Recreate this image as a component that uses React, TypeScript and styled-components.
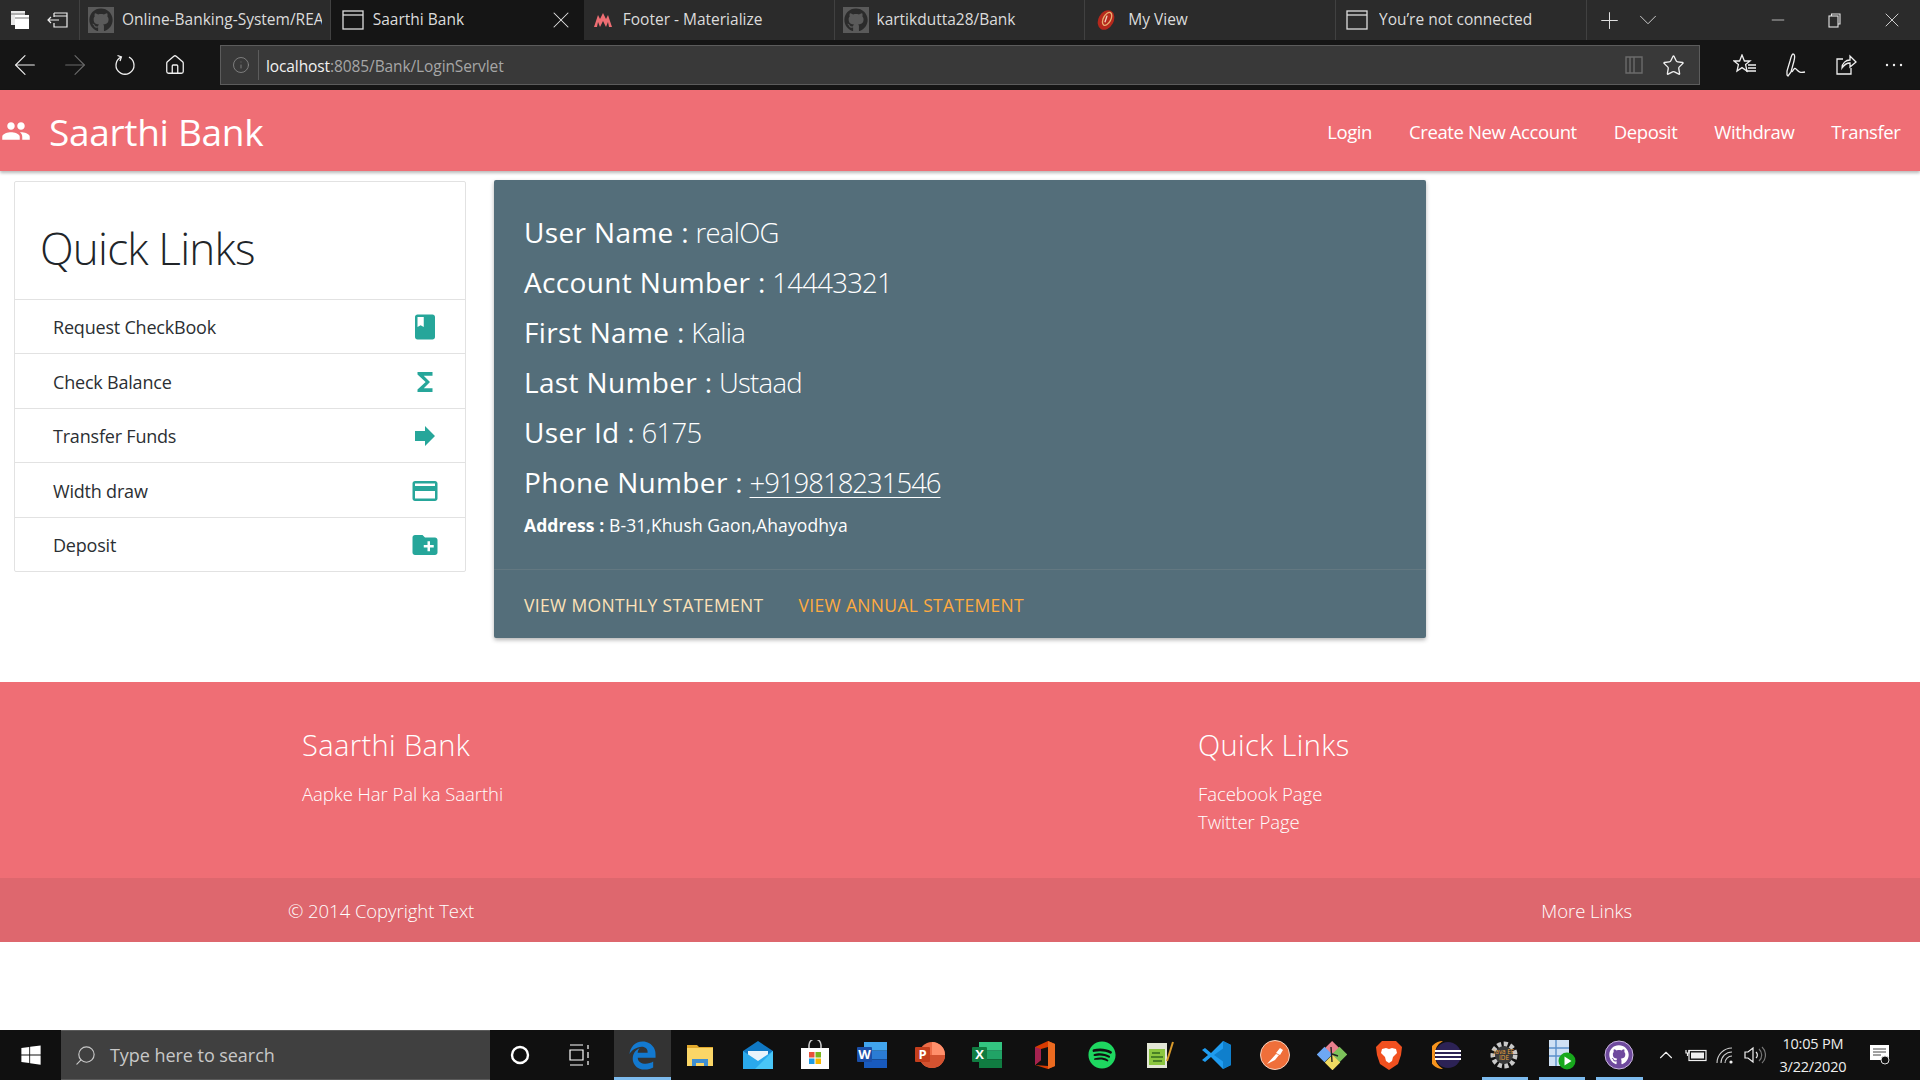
import React from "react";
import styled, { createGlobalStyle } from "styled-components";
import { MdPeople, MdClass, MdFunctions, MdForward, MdCreditCard, MdCreateNewFolder } from "react-icons/md";
import { FaGithub, FaSpotify, FaEdgeLegacy, FaWindows } from "react-icons/fa";
import { ArrowLeft, ArrowRight, Home, Info, Star, Search, ChevronUp, ChevronDown, Plus, Minus, X } from "lucide-react";

const fontStack = `"Open Sans", "Noto Sans", "Liberation Sans", sans-serif`;

const GlobalStyle = createGlobalStyle`
  html, body {
    margin: 0;
    padding: 0;
    background: #fff;
    overflow: hidden;
  }
  * {
    box-sizing: border-box;
  }
`;

const Screen = styled.div`
  width: 1920px;
  height: 1080px;
  display: flex;
  flex-direction: column;
  overflow: hidden;
  font-family: ${fontStack};
`;

/* ---------- browser chrome ---------- */

const TabBar = styled.div`
  height: 40px;
  display: flex;
  background: #2b2b2b;
  color: #e4e4e4;
  flex-shrink: 0;
`;

const TabTools = styled.div`
  width: 80px;
  display: flex;
  align-items: center;
  justify-content: space-around;
  padding: 0 2px;
  border-right: 1px solid #414141;
`;

const Tab = styled.div<{ $active?: boolean }>`
  width: ${(p) => (p.$active ? 253 : 250.75)}px;
  display: flex;
  align-items: center;
  gap: ${(p) => (p.$active ? 9 : 11)}px;
  padding: 0 8px 0 ${(p) => (p.$active ? 11 : 10)}px;
  background: ${(p) => (p.$active ? "#151515" : "transparent")};
  border-right: 1px solid ${(p) => (p.$active ? "transparent" : "#414141")};
  overflow: hidden;
`;

const TabTitle = styled.span`
  flex: 1;
  font-size: 15.5px;
  line-height: 38px;
  padding-bottom: 2px;
  white-space: nowrap;
  overflow: hidden;
  color: #dcdcdc;
`;

const Favicon = styled.span`
  width: 26px;
  height: 26px;
  margin: 0 -3px 0 -2px;
  flex-shrink: 0;
  display: flex;
  align-items: center;
  justify-content: center;
  background: #5a5a5a;
  color: #2b2b2b;
`;

const TabEnd = styled.div`
  flex: 1;
  display: flex;
  align-items: center;
  padding-left: 4px;
  color: #e0e0e0;
`;

const TabButton = styled.span`
  width: 38px;
  display: flex;
  justify-content: center;
`;

const WindowButtons = styled.div`
  margin-left: auto;
  display: flex;
  align-items: center;
`;

const WindowButton = styled.span`
  width: 57px;
  display: flex;
  justify-content: center;
`;

const Toolbar = styled.div`
  height: 50px;
  display: flex;
  align-items: center;
  background: #151515;
  color: #f0f0f0;
  flex-shrink: 0;
`;

const NavButtons = styled.div`
  width: 220px;
  display: flex;
  align-items: center;
`;

const NavButton = styled.span<{ $dim?: boolean }>`
  width: 50px;
  display: flex;
  justify-content: center;
  color: ${(p) => (p.$dim ? "#6a6a6a" : "#f0f0f0")};
`;

const AddressBar = styled.div`
  width: 1480px;
  height: 40px;
  display: flex;
  align-items: center;
  background: #393939;
  border: 1px solid #5c5c5c;
  padding: 0 14px 0 11px;
  gap: 7px;
  color: #8a8a8a;
`;

const AddressDivider = styled.span`
  width: 1px;
  height: 30px;
  margin-left: 1px;
  background: #5c5c5c;
`;

const Url = styled.span`
  flex: 1;
  padding-top: 2px;
  font-size: 15.5px;
  letter-spacing: -0.1px;
  color: #a6a6a6;
`;

const UrlHost = styled.span`
  color: #f2f2f2;
`;

const AddressIcons = styled.div`
  display: flex;
  align-items: center;
  gap: 18px;
  color: #f0f0f0;
`;

const ToolIcons = styled.div`
  flex: 1;
  display: flex;
  align-items: center;
  justify-content: space-around;
  padding: 0 3px 0 20px;
  color: #f0f0f0;
`;

/* ---------- site navbar ---------- */

const Navbar = styled.nav`
  height: 81px;
  display: flex;
  align-items: center;
  padding-top: 2px;
  background: #ef6e75;
  color: #fff;
  box-shadow: 0 2px 3px rgba(0, 0, 0, 0.28);
  position: relative;
  flex-shrink: 0;
`;

const Brand = styled.div`
  display: flex;
  align-items: center;
  gap: 18px;
  font-size: 37px;
  font-weight: 400;
  letter-spacing: -0.3px;
  padding-left: 1px;
`;

const BrandIcon = styled.span`
  display: flex;
  margin-top: -2px;
`;

const NavLinks = styled.div`
  margin-left: auto;
  display: flex;
  padding-right: 1px;
`;

const NavLink = styled.a`
  padding: 0 18.5px;
  font-size: 18.5px;
  letter-spacing: -0.4px;
  font-weight: 400;
`;

/* ---------- page content ---------- */

const Content = styled.main`
  height: 511px;
  display: flex;
  align-items: flex-start;
  gap: 28px;
  padding: 9px 0 0 14px;
  flex-shrink: 0;
`;

const LinksCard = styled.section`
  width: 452px;
  margin-top: 1px;
  background: #fff;
  border: 1px solid #e2e2e2;
  border-radius: 2px;
  color: #212529;
`;

const LinksTitle = styled.h2`
  height: 117px;
  margin: 0;
  padding: 14px 0 0 25px;
  display: flex;
  align-items: center;
  font-size: 44px;
  font-weight: 300;
  letter-spacing: -0.8px;
`;

const LinkRow = styled.div`
  height: 54.45px;
  display: flex;
  align-items: center;
  justify-content: space-between;
  padding: 1px 25px 0 38px;
  border-top: 1px solid #e2e2e2;
  font-size: 18px;
  letter-spacing: -0.2px;
  color: #2b2f33;
  svg {
    color: #26a69a;
  }
`;

const AccountCard = styled.section`
  width: 932px;
  background: #546e7a;
  color: #fff;
  border-radius: 2px;
  box-shadow: 0 2px 4px rgba(0, 0, 0, 0.3);
  overflow: hidden;
`;

const AccountBody = styled.div`
  height: 389px;
  padding: 27px 30px 0;
`;

const Field = styled.div`
  height: 50px;
  line-height: 50px;
  font-size: 27.5px;
  letter-spacing: -0.7px;
  font-weight: 300;
`;

const FieldLabel = styled.span`
  font-size: 28px;
  font-weight: 400;
  letter-spacing: 0.35px;
`;

const Phone = styled.a`
  letter-spacing: -1px;
  text-decoration: underline;
  text-underline-offset: 4px;
  text-decoration-thickness: 1px;
`;

const Address = styled.div`
  margin-top: 6px;
  height: 24px;
  line-height: 24px;
  font-size: 17.5px;
  letter-spacing: 0.1px;
  font-weight: 400;
`;

const AddressLabel = styled.strong`
  font-weight: 700;
`;

const AccountActions = styled.div`
  height: 69px;
  display: flex;
  align-items: center;
  gap: 35px;
  padding: 2px 30px 0;
  border-top: 1px solid rgba(160, 160, 160, 0.2);
`;

const ActionLink = styled.a<{ $pale?: boolean }>`
  font-size: 17.5px;
  letter-spacing: 0.33px;
  font-weight: 400;
  color: ${(p) => (p.$pale ? "#fde2b8" : "#ffab40")};
`;

/* ---------- page footer ---------- */

const PageFooter = styled.footer`
  background: #ef6e75;
  color: #fff;
  flex-shrink: 0;
`;

const FooterMain = styled.div`
  height: 196px;
  width: 1344px;
  margin: 0 auto;
  padding-top: 42px;
  display: grid;
  grid-template-columns: 2fr 1fr;
`;

const FooterColumn = styled.div`
  padding-left: 14px;
`;

const FooterTitle = styled.h5`
  margin: 0 0 14px;
  font-size: 29px;
  line-height: 42px;
  font-weight: 300;
  letter-spacing: 0.4px;
`;

const FooterText = styled.div`
  font-size: 18.5px;
  line-height: 28px;
  letter-spacing: -0.05px;
  font-weight: 300;
  color: #fff;
`;

const CopyrightBar = styled.div`
  height: 64px;
  background: #de676e;
`;

const CopyrightInner = styled.div`
  width: 1344px;
  height: 100%;
  margin: 0 auto;
  display: flex;
  align-items: center;
  justify-content: space-between;
  font-size: 18.5px;
  letter-spacing: -0.05px;
  font-weight: 300;
`;

const Spacer = styled.div`
  flex: 1;
`;

/* ---------- windows taskbar ---------- */

const Taskbar = styled.div`
  height: 50px;
  display: flex;
  align-items: center;
  background: #101010;
  color: #fff;
  flex-shrink: 0;
`;

const StartButton = styled.div`
  width: 61px;
  display: flex;
  justify-content: center;
`;

const SearchBox = styled.div`
  width: 429px;
  height: 50px;
  display: flex;
  align-items: center;
  gap: 13px;
  padding-left: 13px;
  background: #404040;
  border-top: 1px solid #5a5a5a;
  border-bottom: 1px solid #5a5a5a;
  font-size: 18px;
  letter-spacing: -0.05px;
  color: #c8c8c8;
`;

const MirroredSearch = styled(Search)`
  transform: scaleX(-1);
`;

const TaskTool = styled.div`
  width: 60px;
  display: flex;
  justify-content: center;
`;

const AppList = styled.div`
  display: flex;
  margin-left: 4px;
`;

const AppSlot = styled.div<{ $active?: boolean; $running?: boolean }>`
  width: 57.45px;
  height: 50px;
  display: flex;
  align-items: center;
  justify-content: center;
  position: relative;
  background: ${(p) => (p.$active ? "#333" : "transparent")};
  &::after {
    content: "";
    display: ${(p) => (p.$active || p.$running ? "block" : "none")};
    position: absolute;
    bottom: 0;
    left: ${(p) => (p.$active ? 0 : 6)}px;
    right: ${(p) => (p.$active ? 0 : 5)}px;
    height: 3px;
    background: #7dbbee;
  }
`;

const Tray = styled.div`
  flex: 1;
  display: flex;
  align-items: center;
  padding-left: 3px;
  color: #f0f0f0;
`;

const TrayIcon = styled.span<{ $w: number }>`
  width: ${(p) => p.$w}px;
  display: flex;
  justify-content: center;
`;

const Clock = styled.div`
  width: 88px;
  text-align: center;
  font-size: 14.5px;
  line-height: 23px;
  letter-spacing: -0.2px;
  color: #eee;
`;

const Notify = styled.span`
  margin-left: 12px;
  display: flex;
`;

/* ---------- small drawings ---------- */

const TabsAsideIcon = () => (
  <svg width="20" height="20" viewBox="0 0 20 20">
    <rect x="1" y="1" width="14" height="14" fill="#e8e8e8" />
    <rect x="5" y="5" width="14" height="14" fill="#fff" />
    <rect x="1" y="3.5" width="14" height="1" fill="#777" />
    <rect x="5" y="7.5" width="14" height="1" fill="#777" />
  </svg>
);

const SetAsideIcon = () => (
  <svg width="22" height="18" viewBox="0 0 22 18" fill="none" stroke="#eee" strokeWidth="1.2">
    <path d="M7 2h13v14H7v-4M7 6V2M7 5h13M1 9h11M4 6L1 9l3 3" />
  </svg>
);

const PageIcon = () => (
  <svg width="22" height="20" viewBox="0 0 22 20" fill="none" stroke="#ddd" strokeWidth="1.3">
    <rect x="1" y="1" width="20" height="18" />
    <path d="M1 5h20" />
  </svg>
);

const MaterializeIcon = () => (
  <svg width="18" height="14" viewBox="0 0 18 14" fill="#ee6e73">
    <path d="M0 14L4 2l2 4 3-6 3 6 2-4 4 12h-3l-1-5-2 5-3-6-3 6-2-5-1 5z" />
  </svg>
);

const MyViewIcon = () => (
  <svg width="22" height="24" viewBox="0 0 20 22">
    <ellipse cx="10" cy="11" rx="7" ry="9.5" transform="rotate(28 10 11)" fill="#b5281c" />
    <ellipse cx="11" cy="10" rx="3.4" ry="6.5" transform="rotate(28 11 10)" fill="none" stroke="#e8b070" strokeWidth="1.2" />
    <path d="M9 13l2-6" stroke="#f2d6c0" strokeWidth="1.2" />
  </svg>
);

const RestoreIcon = () => (
  <svg width="13" height="15" viewBox="0 0 13 15" fill="none" stroke="#e6e6e6" strokeWidth="1.1">
    <rect x="1" y="3" width="9" height="11" />
    <path d="M3.5 3V1h8.5v10h-2" />
  </svg>
);

const RefreshIcon = () => (
  <svg width="22" height="22" viewBox="0 0 22 22" fill="none" stroke="#f0f0f0" strokeWidth="1.3">
    <path d="M7 3.2a9 9 0 1 0 8 0" />
    <path d="M3.5 1.5L7.4 3 6 7" />
  </svg>
);

const ReadingIcon = () => (
  <svg width="20" height="20" viewBox="0 0 20 20" fill="none" stroke="#6b6b6b" strokeWidth="1.4">
    <path d="M2 2h16v16H2zM10 2v16M6 2v16" />
  </svg>
);

const HubIcon = () => (
  <svg width="24" height="22" viewBox="0 0 24 22" fill="none" stroke="#f0f0f0" strokeWidth="1.3">
    <path d="M9 1l2.4 6H17l-4.4 3.6L14 17l-5-3.4L4 17l1.4-6.4L1 7h5.6z" />
    <path d="M15 11h8M15 14h8M13 17h10" />
  </svg>
);

const InkIcon = () => (
  <svg width="24" height="24" viewBox="0 0 24 24" fill="none" stroke="#f0f0f0" strokeWidth="1.3">
    <path d="M9 1c2 0 2 3 1 7L7 19l-3 4-1-1 0-4 3-10c1-4 2-7 3-7zM8 19c3-5 3-4 5-2s3 3 8 2" />
  </svg>
);

const ShareIcon = () => (
  <svg width="22" height="22" viewBox="0 0 22 22" fill="none" stroke="#f0f0f0" strokeWidth="1.3">
    <path d="M8 5H2v15h14v-6M7 14c0-5 4-8 8-8V2l6 6-6 5V9c-4 0-6 2-8 5z" />
  </svg>
);

const MoreIcon = () => (
  <svg width="20" height="4" viewBox="0 0 20 4" fill="#f0f0f0">
    <circle cx="3" cy="2" r="1.2" />
    <circle cx="10" cy="2" r="1.2" />
    <circle cx="17" cy="2" r="1.2" />
  </svg>
);

const CortanaIcon = () => (
  <svg width="20" height="20" viewBox="0 0 20 20" fill="none" stroke="#fff" strokeWidth="2.4">
    <circle cx="10" cy="10" r="8" />
  </svg>
);

const TaskViewIcon = () => (
  <svg width="22" height="22" viewBox="0 0 22 22" fill="none" stroke="#fff" strokeWidth="1.2">
    <path d="M1 1h13M1 21h13M1 6h13v10H1zM19 1v4M19 8v6M19 17v4" />
  </svg>
);

const ExplorerIcon = () => (
  <svg width="28" height="26" viewBox="0 0 28 26">
    <path d="M1 3h10l2 2h14v4H1z" fill="#e2a92c" />
    <rect x="1" y="6" width="26" height="18" fill="#fbd667" />
    <path d="M6 24v-7h16v7h-4v-3h-8v3z" fill="#3f8fd2" />
  </svg>
);

const MailIcon = () => (
  <svg width="30" height="28" viewBox="0 0 30 28">
    <path d="M0 10L15 0l15 10v18H0z" fill="#0f78c4" />
    <path d="M5 10h20v8l-10 6-10-6z" fill="#e8f3fb" />
    <path d="M0 10l15 10L30 10v18H0z" fill="#2aa9ec" />
    <path d="M30 10v18H12z" fill="#49c6f7" />
  </svg>
);

const StoreIcon = () => (
  <svg width="30" height="30" viewBox="0 0 30 30">
    <path d="M9 8V5a6 6 0 0112 0v3" fill="none" stroke="#c9c9c9" strokeWidth="1.6" />
    <rect x="1" y="8" width="28" height="21" fill="#fff" />
    <rect x="9" y="12" width="5.5" height="5.5" fill="#e8503a" />
    <rect x="15.5" y="12" width="5.5" height="5.5" fill="#7ab51d" />
    <rect x="9" y="18.5" width="5.5" height="5.5" fill="#1d9be6" />
    <rect x="15.5" y="18.5" width="5.5" height="5.5" fill="#f7b500" />
  </svg>
);

const OfficeLetterIcon = ({ letter, tones, box }: { letter: string; tones: string[]; box: string }) => (
  <svg width="30" height="26" viewBox="0 0 30 26">
    <rect x="7" y="0" width="23" height="8.7" fill={tones[0]} />
    <rect x="7" y="8.7" width="23" height="8.7" fill={tones[1]} />
    <rect x="7" y="17.4" width="23" height="8.6" fill={tones[2]} />
    <rect x="0" y="5" width="15" height="15" rx="1" fill={box} />
    <text x="7.5" y="17" textAnchor="middle" fontSize="13" fontWeight="700" fill="#fff" fontFamily="Open Sans, sans-serif">
      {letter}
    </text>
  </svg>
);

const PowerPointIcon = () => (
  <svg width="30" height="26" viewBox="0 0 30 26">
    <circle cx="17" cy="13" r="13" fill="#ed6c47" />
    <path d="M17 0a13 13 0 0113 13H17z" fill="#ff8f6b" />
    <path d="M4 13h26a13 13 0 01-26 0z" fill="#d35230" />
    <rect x="0" y="5" width="15" height="15" rx="1" fill="#c43e1c" />
    <text x="7.5" y="17" textAnchor="middle" fontSize="13" fontWeight="700" fill="#fff" fontFamily="Open Sans, sans-serif">
      P
    </text>
  </svg>
);

const OfficeIcon = () => (
  <svg width="24" height="28" viewBox="0 0 24 28">
    <path d="M2 6L15 0l7 3v22l-7 3-13-4 13 1V6L8 8v11l-6 5z" fill="#d83b01" />
    <path d="M2 6l6 2v11l-6 5z" fill="#a5224f" />
    <path d="M15 0l7 3v22l-7 3z" fill="#eb6a20" />
  </svg>
);

const NotepadIcon = () => (
  <svg width="28" height="28" viewBox="0 0 28 28">
    <rect x="1" y="2" width="20" height="25" fill="#e3e7d6" />
    <rect x="3" y="8" width="16" height="16" fill="#8cc63f" />
    <path d="M6 12h8M5 16h12M7 20h9" stroke="#33691e" strokeWidth="1.4" />
    <path d="M21 20L27 1" stroke="#d99a2b" strokeWidth="2" />
  </svg>
);

const VsCodeIcon = () => (
  <svg width="30" height="30" viewBox="0 0 30 30">
    <path d="M21 1l8 4v20l-8 4-12-12-6 5-3-2 6-5-6-5 3-2 6 5z" fill="#1f9cf0" />
    <path d="M21 1l8 4v20l-8 4zM21 8.5L12 15l9 6.5z" fill="#0f7fcc" fillRule="evenodd" />
  </svg>
);

const PostmanIcon = () => (
  <svg width="30" height="30" viewBox="0 0 30 30">
    <circle cx="15" cy="15" r="14.5" fill="#ef6f3a" stroke="#f7d3c0" strokeWidth="1" />
    <path d="M7 24l9-10 3 1-4 5zM16 13l4-5 3 2-3 5z" fill="#fff" />
  </svg>
);

const SourcetreeIcon = () => (
  <svg width="30" height="30" viewBox="0 0 30 30">
    <rect x="11" y="1" width="10" height="10" transform="rotate(45 13 6)" fill="#e8808e" />
    <rect x="2" y="9" width="11" height="11" transform="rotate(45 7.5 14.5)" fill="#6ea8f5" />
    <rect x="17" y="9" width="11" height="11" transform="rotate(45 22.5 14.5)" fill="#7cc25a" />
    <rect x="10" y="17" width="11" height="11" transform="rotate(45 15.5 22.5)" fill="#f2dc62" />
    <path d="M14 7l1 15M15 14l6 2" stroke="#222" strokeWidth="1.4" />
  </svg>
);

const BraveIcon = () => (
  <svg width="26" height="30" viewBox="0 0 26 30">
    <path d="M6 1h14l3 3 3 3-1 8-3 9-9 6-9-6-3-9-1-8 3-3z" fill="#f1501f" />
    <path d="M6 9l4-1 3 1 3-1 4 1 1 4-4 4-1 4-3 2-3-2-1-4-4-4z" fill="#fff" />
  </svg>
);

const EclipseIcon = () => (
  <svg width="30" height="28" viewBox="0 0 30 28">
    <path d="M11 0a14 14 0 000 28A16 16 0 0111 0z" fill="#f7941e" />
    <circle cx="16" cy="14" r="13" fill="#2c2255" />
    <path d="M3 10h26M3 14h26M3 18h26" stroke="#fff" strokeWidth="2" />
  </svg>
);

const JavaEeIcon = () => (
  <svg width="28" height="28" viewBox="0 0 28 28">
    <circle cx="14" cy="14" r="11" fill="none" stroke="#c9c9c9" strokeWidth="5" strokeDasharray="4 2.4" />
    <circle cx="14" cy="14" r="9" fill="#3a3a3a" />
    <text x="14" y="12.5" textAnchor="middle" fontSize="6.4" fill="#e8a13c" fontFamily="Open Sans, sans-serif">
      Java EE
    </text>
    <text x="14" y="19" textAnchor="middle" fontSize="6.4" fill="#e8a13c" fontFamily="Open Sans, sans-serif">
      IDE
    </text>
  </svg>
);

const DbRunIcon = () => (
  <svg width="28" height="30" viewBox="0 0 28 30">
    <rect x="1" y="0" width="20" height="26" fill="#cfe0f4" />
    <path d="M1 8h20M1 16h20M8 0v26" stroke="#5b8fc9" strokeWidth="1.4" />
    <circle cx="19" cy="21" r="8.5" fill="#17a81c" />
    <path d="M16.5 16.5l7 4.5-7 4.5z" fill="#fff" />
  </svg>
);

const GithubDesktopIcon = () => (
  <svg width="30" height="30" viewBox="0 0 30 30">
    <circle cx="15" cy="15" r="14" fill="#6f4a9e" stroke="#cbb7e0" strokeWidth="1" />
    <foreignObject x="5" y="5" width="20" height="20">
      <FaGithub size={20} color="#fff" />
    </foreignObject>
  </svg>
);

const BatteryIcon = () => (
  <svg width="22" height="14" viewBox="0 0 22 14" fill="none" stroke="#f0f0f0" strokeWidth="1.2">
    <rect x="4" y="2.5" width="17" height="10" />
    <rect x="6" y="4.5" width="13" height="6" fill="#f0f0f0" stroke="none" />
    <path d="M1 2v3h3V2M2.5 5v3" />
  </svg>
);

const WifiIcon = () => (
  <svg width="20" height="18" viewBox="0 0 20 18" fill="none" stroke="#cfcfcf" strokeWidth="1.1">
    <path d="M1 17A15 15 0 0116 2M5 17A11 11 0 0116 6M9 17A7 7 0 0116 10" />
    <circle cx="15" cy="16" r="1.6" fill="#f0f0f0" stroke="none" />
  </svg>
);

const VolumeIcon = () => (
  <svg width="22" height="18" viewBox="0 0 22 18" fill="none" stroke="#f0f0f0" strokeWidth="1.2">
    <path d="M1 6h3l5-4v14l-5-4H1z" />
    <path d="M12 6a4 4 0 010 6" />
    <path d="M15 3a8 8 0 010 12M18 1a11 11 0 010 16" stroke="#777" />
  </svg>
);

const NotifyIcon = () => (
  <svg width="22" height="20" viewBox="0 0 22 20">
    <path d="M1 0h19v15h-5l-2 3v-3H1z" fill="#fff" />
    <path d="M4 4h13M4 7h13M4 10h8" stroke="#444" strokeWidth="1" />
    <circle cx="16" cy="15" r="4" fill="#101010" stroke="#ddd" strokeWidth="1" />
  </svg>
);

/* ---------- data ---------- */

const links = [
  { label: "Request CheckBook", icon: <MdClass size={30} /> },
  { label: "Check Balance", icon: <MdFunctions size={30} /> },
  { label: "Transfer Funds", icon: <MdForward size={30} /> },
  { label: "Width draw", icon: <MdCreditCard size={30} /> },
  { label: "Deposit", icon: <MdCreateNewFolder size={30} /> },
];

const fields = [
  { label: "User Name", value: "realOG" },
  { label: "Account Number", value: "14443321" },
  { label: "First Name", value: "Kalia" },
  { label: "Last Number", value: "Ustaad" },
  { label: "User Id", value: "6175" },
];

const navItems = ["Login", "Create New Account", "Deposit", "Withdraw", "Transfer"];

const apps = [
  { icon: <FaEdgeLegacy size={29} color="#1379cf" />, active: true },
  { icon: <ExplorerIcon /> },
  { icon: <MailIcon /> },
  { icon: <StoreIcon /> },
  { icon: <OfficeLetterIcon letter="W" box="#1a4fa8" tones={["#41a5ee", "#2b7cd3", "#185abd"]} /> },
  { icon: <PowerPointIcon /> },
  { icon: <OfficeLetterIcon letter="X" box="#107c41" tones={["#33c481", "#21a366", "#107c41"]} /> },
  { icon: <OfficeIcon /> },
  { icon: <FaSpotify size={28} color="#1ed760" /> },
  { icon: <NotepadIcon /> },
  { icon: <VsCodeIcon /> },
  { icon: <PostmanIcon /> },
  { icon: <SourcetreeIcon /> },
  { icon: <BraveIcon /> },
  { icon: <EclipseIcon /> },
  { icon: <JavaEeIcon />, running: true },
  { icon: <DbRunIcon />, running: true },
  { icon: <GithubDesktopIcon />, running: true },
];

export default function App() {
  return (
    <Screen>
      <GlobalStyle />

      <TabBar>
        <TabTools>
          <TabsAsideIcon />
          <SetAsideIcon />
        </TabTools>
        <Tab>
          <Favicon><FaGithub size={24} /></Favicon>
          <TabTitle>Online-Banking-System/README</TabTitle>
        </Tab>
        <Tab $active>
          <PageIcon />
          <TabTitle>Saarthi Bank</TabTitle>
          <X size={28} strokeWidth={0.9} />
        </Tab>
        <Tab>
          <MaterializeIcon />
          <TabTitle>Footer - Materialize</TabTitle>
        </Tab>
        <Tab>
          <Favicon><FaGithub size={24} /></Favicon>
          <TabTitle>kartikdutta28/Bank</TabTitle>
        </Tab>
        <Tab>
          <MyViewIcon />
          <TabTitle>My View</TabTitle>
        </Tab>
        <Tab>
          <PageIcon />
          <TabTitle>You’re not connected</TabTitle>
        </Tab>
        <TabEnd>
          <TabButton><Plus size={27} strokeWidth={0.9} /></TabButton>
          <TabButton><ChevronDown size={30} strokeWidth={0.7} /></TabButton>
          <WindowButtons>
            <WindowButton><Minus size={20} strokeWidth={0.9} /></WindowButton>
            <WindowButton><RestoreIcon /></WindowButton>
            <WindowButton><X size={24} strokeWidth={0.9} /></WindowButton>
          </WindowButtons>
        </TabEnd>
      </TabBar>

      <Toolbar>
        <NavButtons>
          <NavButton><ArrowLeft size={32} strokeWidth={0.8} /></NavButton>
          <NavButton $dim><ArrowRight size={32} strokeWidth={0.8} /></NavButton>
          <NavButton><RefreshIcon /></NavButton>
          <NavButton><Home size={22} strokeWidth={1.4} /></NavButton>
        </NavButtons>
        <AddressBar>
          <Info size={18} strokeWidth={1.1} />
          <AddressDivider />
          <Url><UrlHost>localhost</UrlHost>:8085/Bank/LoginServlet</Url>
          <AddressIcons>
            <ReadingIcon />
            <Star size={23} strokeWidth={1.4} />
          </AddressIcons>
        </AddressBar>
        <ToolIcons>
          <HubIcon />
          <InkIcon />
          <ShareIcon />
          <MoreIcon />
        </ToolIcons>
      </Toolbar>

      <Navbar>
        <Brand>
          <BrandIcon><MdPeople size={30} /></BrandIcon>
          Saarthi Bank
        </Brand>
        <NavLinks>
          {navItems.map((item) => (
            <NavLink key={item}>{item}</NavLink>
          ))}
        </NavLinks>
      </Navbar>

      <Content>
        <LinksCard>
          <LinksTitle>Quick Links</LinksTitle>
          {links.map((link) => (
            <LinkRow key={link.label}>
              {link.label}
              {link.icon}
            </LinkRow>
          ))}
        </LinksCard>

        <AccountCard>
          <AccountBody>
            {fields.map((field) => (
              <Field key={field.label}>
                <FieldLabel>{field.label} :</FieldLabel> {field.value}
              </Field>
            ))}
            <Field>
              <FieldLabel>Phone Number :</FieldLabel> <Phone>+919818231546</Phone>
            </Field>
            <Address>
              <AddressLabel>Address :</AddressLabel> B-31,Khush Gaon,Ahayodhya
            </Address>
          </AccountBody>
          <AccountActions>
            <ActionLink $pale>VIEW MONTHLY STATEMENT</ActionLink>
            <ActionLink>VIEW ANNUAL STATEMENT</ActionLink>
          </AccountActions>
        </AccountCard>
      </Content>

      <PageFooter>
        <FooterMain>
          <FooterColumn>
            <FooterTitle>Saarthi Bank</FooterTitle>
            <FooterText>Aapke Har Pal ka Saarthi</FooterText>
          </FooterColumn>
          <FooterColumn>
            <FooterTitle>Quick Links</FooterTitle>
            <FooterText>Facebook Page</FooterText>
            <FooterText>Twitter Page</FooterText>
          </FooterColumn>
        </FooterMain>
        <CopyrightBar>
          <CopyrightInner>
            <span>© 2014 Copyright Text</span>
            <span>More Links</span>
          </CopyrightInner>
        </CopyrightBar>
      </PageFooter>

      <Spacer />

      <Taskbar>
        <StartButton><FaWindows size={22} /></StartButton>
        <SearchBox>
          <MirroredSearch size={23} strokeWidth={1.2} />
          Type here to search
        </SearchBox>
        <TaskTool><CortanaIcon /></TaskTool>
        <TaskTool><TaskViewIcon /></TaskTool>
        <AppList>
          {apps.map((app, i) => (
            <AppSlot key={i} $active={app.active} $running={app.running}>
              {app.icon}
            </AppSlot>
          ))}
        </AppList>
        <Tray>
          <TrayIcon $w={30}><ChevronUp size={22} strokeWidth={1.2} /></TrayIcon>
          <TrayIcon $w={30}><BatteryIcon /></TrayIcon>
          <TrayIcon $w={31}><WifiIcon /></TrayIcon>
          <TrayIcon $w={27}><VolumeIcon /></TrayIcon>
          <Clock>
            <div>10:05 PM</div>
            <div>3/22/2020</div>
          </Clock>
          <Notify><NotifyIcon /></Notify>
        </Tray>
      </Taskbar>
    </Screen>
  );
}
